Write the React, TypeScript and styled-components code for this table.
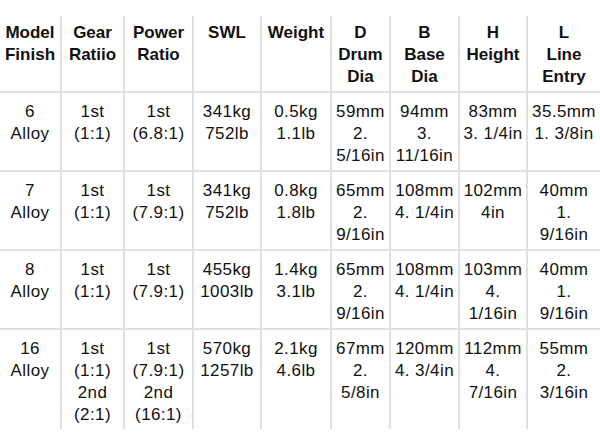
import React from 'react';
import styled, { createGlobalStyle } from 'styled-components';

type Lines = string[];

const columnWidths = [61, 63, 69, 68, 70, 59, 69, 68, 73];

const header: Lines[] = [
  ['Model', 'Finish'],
  ['Gear', 'Ratiio'],
  ['Power', 'Ratio'],
  ['SWL'],
  ['Weight'],
  ['D', 'Drum', 'Dia'],
  ['B', 'Base', 'Dia'],
  ['H', 'Height'],
  ['L', 'Line', 'Entry'],
];

const rows: Lines[][] = [
  [
    ['6', 'Alloy'],
    ['1st', '(1:1)'],
    ['1st', '(6.8:1)'],
    ['341kg', '752lb'],
    ['0.5kg', '1.1lb'],
    ['59mm', '2.', '5/16in'],
    ['94mm', '3.', '11/16in'],
    ['83mm', '3. 1/4in'],
    ['35.5mm', '1. 3/8in'],
  ],
  [
    ['7', 'Alloy'],
    ['1st', '(1:1)'],
    ['1st', '(7.9:1)'],
    ['341kg', '752lb'],
    ['0.8kg', '1.8lb'],
    ['65mm', '2.', '9/16in'],
    ['108mm', '4. 1/4in'],
    ['102mm', '4in'],
    ['40mm', '1.', '9/16in'],
  ],
  [
    ['8', 'Alloy'],
    ['1st', '(1:1)'],
    ['1st', '(7.9:1)'],
    ['455kg', '1003lb'],
    ['1.4kg', '3.1lb'],
    ['65mm', '2.', '9/16in'],
    ['108mm', '4. 1/4in'],
    ['103mm', '4.', '1/16in'],
    ['40mm', '1.', '9/16in'],
  ],
  [
    ['16', 'Alloy'],
    ['1st', '(1:1)', '2nd', '(2:1)'],
    ['1st', '(7.9:1)', '2nd', '(16:1)'],
    ['570kg', '1257lb'],
    ['2.1kg', '4.6lb'],
    ['67mm', '2.', '5/8in'],
    ['120mm', '4. 3/4in'],
    ['112mm', '4.', '7/16in'],
    ['55mm', '2.', '3/16in'],
  ],
];

const renderLines = (lines: Lines) =>
  lines.map((line, i) => (
    <React.Fragment key={i}>
      {i > 0 && <br />}
      {line}
    </React.Fragment>
  ));

export default function App() {
  return (
    <>
      <GlobalStyle />
      <Page>
        <SpecTable>
          <colgroup>
            {columnWidths.map((w, i) => (
              <col key={i} style={{ width: w }} />
            ))}
          </colgroup>
          <thead>
            <tr>
              {header.map((cell, i) => (
                <HeadCell key={i}>{renderLines(cell)}</HeadCell>
              ))}
            </tr>
          </thead>
          <tbody>
            {rows.map((row, r) => (
              <tr key={r}>
                {row.map((cell, c) => (
                  <Cell key={c}>{renderLines(cell)}</Cell>
                ))}
              </tr>
            ))}
          </tbody>
        </SpecTable>
      </Page>
    </>
  );
}

const GlobalStyle = createGlobalStyle`
  html, body {
    margin: 0;
    padding: 0;
    background: #ffffff;
  }
  body {
    font-family: "Liberation Sans", Arial, Helvetica, sans-serif;
    color: #111111;
  }
`;

const Page = styled.div`
  width: 600px;
  height: 435px;
  padding-top: 16px;
  box-sizing: border-box;
  overflow: hidden;
`;

const SpecTable = styled.table`
  width: 600px;
  table-layout: fixed;
  border-collapse: collapse;
  border-style: hidden;
  font-size: 17px;
  line-height: 22px;
`;

const HeadCell = styled.th`
  border: 2px solid #e0e0e0;
  padding: 6px 0 3px;
  font-weight: bold;
  text-align: center;
  vertical-align: top;
  white-space: nowrap;
`;

const Cell = styled.td`
  border: 2px solid #e0e0e0;
  padding: 8px 0 3px;
  text-align: center;
  vertical-align: top;
  white-space: nowrap;
  letter-spacing: 0.4px;
`;
